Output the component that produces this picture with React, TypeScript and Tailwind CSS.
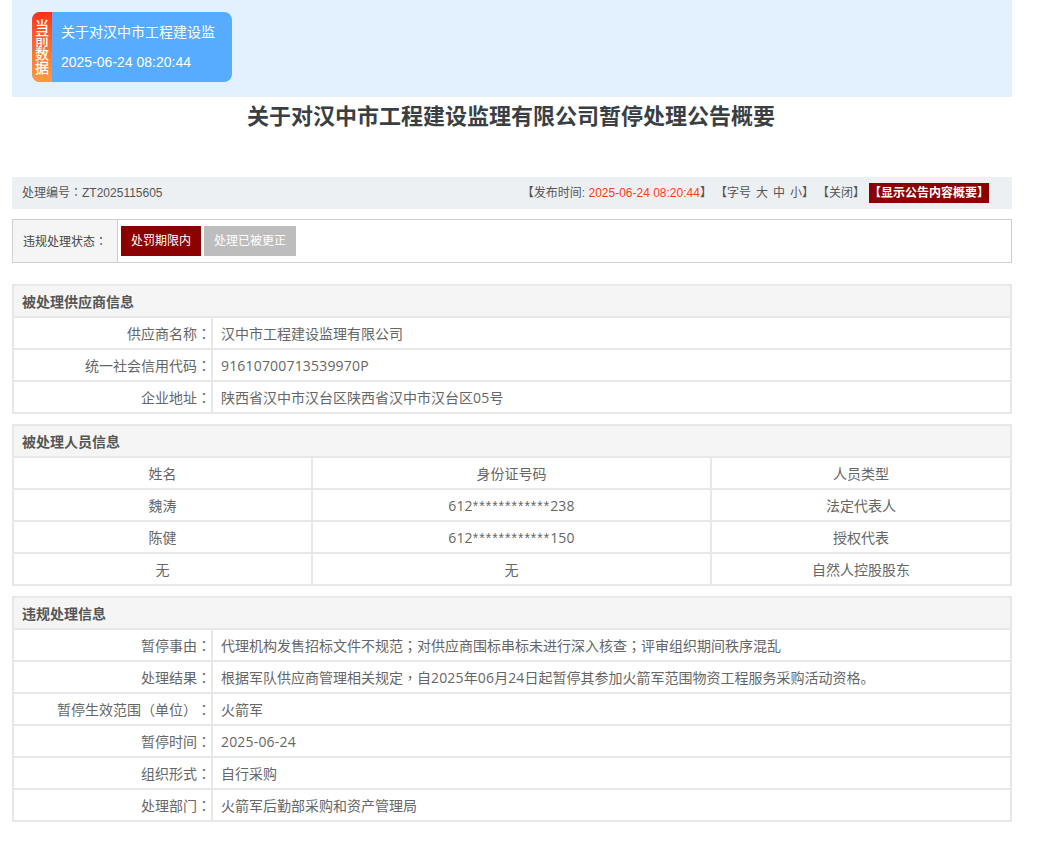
const sans = "font-['Open_Sans','Noto_Sans_CJK_SC',sans-serif]";

const supplierRows = [
  ['供应商名称：', '汉中市工程建设监理有限公司'],
  ['统一社会信用代码：', '91610700713539970P'],
  ['企业地址：', '陕西省汉中市汉台区陕西省汉中市汉台区05号'],
];

const personRows = [
  ['姓名', '身份证号码', '人员类型'],
  ['魏涛', '612************238', '法定代表人'],
  ['陈健', '612************150', '授权代表'],
  ['无', '无', '自然人控股股东'],
];

const violationRows = [
  ['暂停事由：', '代理机构发售招标文件不规范；对供应商围标串标未进行深入核查；评审组织期间秩序混乱'],
  ['处理结果：', '根据军队供应商管理相关规定，自2025年06月24日起暂停其参加火箭军范围物资工程服务采购活动资格。'],
  ['暂停生效范围（单位）：', '火箭军'],
  ['暂停时间：', '2025-06-24'],
  ['组织形式：', '自行采购'],
  ['处理部门：', '火箭军后勤部采购和资产管理局'],
];

// punctuation sits centred in its cell in the reference font, digits run a bit wider
function Txt({ children }: { children: string }) {
  const parts = children.split(/([，；：（）]|[0-9A-Z-]+|\*+)/).filter(Boolean);
  return (
    <>
      {parts.map((part, i) => {
        if (/^[，；：（）]$/.test(part)) {
          return (
            <span key={i} className="font-['Noto_Sans_CJK_TC',sans-serif] leading-none">
              {part}
            </span>
          );
        }
        if (part[0] === '*') {
          return (
            <span key={i} className="font-['Liberation_Sans',sans-serif] leading-none tracking-[1px]">
              {part}
            </span>
          );
        }
        if (/^[0-9A-Z-]+$/.test(part)) {
          return (
            <span key={i} className="tracking-[0.18px]">
              {part}
            </span>
          );
        }
        return <span key={i}>{part}</span>;
      })}
    </>
  );
}

function Section({ title, children }: { title: string; children: React.ReactNode }) {
  return (
    <div className="border-2 border-b-0 border-[#e8e8e8] bg-white">
      <div className="h-8 border-b-2 border-[#e8e8e8] bg-[#f5f5f5] pl-2 text-sm leading-[32px] font-bold text-[#555]">
        {title}
      </div>
      {children}
    </div>
  );
}

function InfoRows({ rows }: { rows: string[][] }) {
  return (
    <>
      {rows.map((row) => (
        <div key={row[0]} className="flex h-8 border-b-2 border-[#e8e8e8] text-sm leading-[32px] text-[#666]">
          <div className="w-[199px] border-r-2 border-[#e8e8e8] text-right">
            <Txt>{row[0]}</Txt>
          </div>
          <div className="flex-1 pl-2">
            <Txt>{row[1]}</Txt>
          </div>
        </div>
      ))}
    </>
  );
}

export default function App() {
  return (
    <div className={`ml-3 w-[1000px] bg-white pb-[44px] [text-spacing-trim:space-all] ${sans}`}>
      <div className="h-[97px] bg-[#e3f1ff] px-5 pt-3">
        <div className="flex h-[70px] w-[200px] overflow-hidden rounded-lg bg-[#57acff]">
          <div className="flex w-5 items-center justify-center bg-gradient-to-b from-[#ff2a17] to-[#ff9a40] text-sm leading-[14px] font-medium text-white">
            <span className="w-[14px] break-all">当前数据</span>
          </div>
          <div className="flex-1 pl-[9px] text-sm text-white">
            <div className="mt-[10px] leading-5 whitespace-nowrap">关于对汉中市工程建设监</div>
            <div className="mt-[10px] font-['Liberation_Sans',sans-serif] leading-5">2025-06-24 08:20:44</div>
          </div>
        </div>
      </div>

      <h1 className="mt-[2px] h-[32px] pr-[2px] text-center text-[22px] leading-8 font-bold text-[#3a3f44]">
        关于对汉中市工程建设监理有限公司暂停处理公告概要
      </h1>

      <div className="mt-[46px] flex h-8 items-center justify-between bg-[#edf0f3] pr-[23px] pl-[10px] font-['Liberation_Sans','Noto_Sans_CJK_SC',sans-serif] text-xs text-[#555]">
        <div>
          <Txt>处理编号：</Txt>ZT2025115605
        </div>
        <div className="flex items-center">
          <span>
            【发布时间: <span className="text-[#ff3a1a]">2025-06-24 08:20:44</span>】
          </span>
          <span className="ml-[3px] flex">
            <span>【字号</span>
            <span className="ml-[5px]">大</span>
            <span className="ml-[5px]">中</span>
            <span className="ml-[5px]">小】</span>
          </span>
          <span className="ml-[3px]">【关闭】</span>
          <span className="ml-[4px] flex h-5 items-center bg-[#8b0000] font-bold text-white">【显示公告内容概要】</span>
        </div>
      </div>

      <div className="mt-[10px] flex h-11 border border-[#cfcfcf] text-xs">
        <div className="flex w-[105px] items-center border-r border-[#cfcfcf] bg-[#f5f5f5] pt-[2px] pl-[10px] text-[#444]">
          <span>
            <Txt>违规处理状态：</Txt>
          </span>
        </div>
        <div className="flex items-center gap-[3px] pl-[3px]">
          <span className="flex h-[30px] w-20 items-center justify-center bg-[#8b0000] text-white">处罚期限内</span>
          <span className="flex h-[30px] w-[92px] items-center justify-center bg-[#bdbdbd] text-white">处理已被更正</span>
        </div>
      </div>

      <div className="mt-[21px] flex flex-col gap-[10px]">
        <Section title="被处理供应商信息">
          <InfoRows rows={supplierRows} />
        </Section>

        <Section title="被处理人员信息">
          {personRows.map((row) => (
            <div key={row[1] + row[0]} className="flex h-8 border-b-2 border-[#e8e8e8] text-center text-sm leading-[32px] text-[#666]">
              <div className="w-[299px] border-r-2 border-[#e8e8e8]">{row[0]}</div>
              <div className="w-[399px] border-r-2 border-[#e8e8e8]">
                <Txt>{row[1]}</Txt>
              </div>
              <div className="flex-1">{row[2]}</div>
            </div>
          ))}
        </Section>

        <Section title="违规处理信息">
          <InfoRows rows={violationRows} />
        </Section>
      </div>
    </div>
  );
}
